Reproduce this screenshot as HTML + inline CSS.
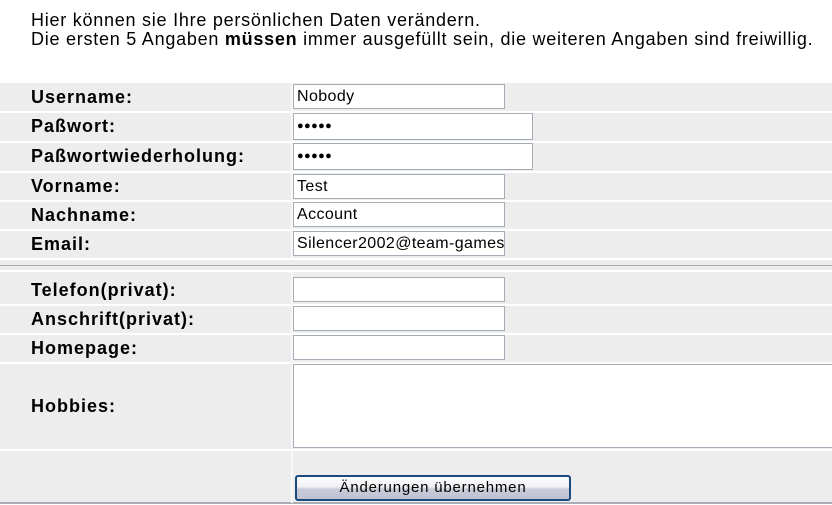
<html><head><style>
body{margin:0;background:#fff;font-family:"Liberation Sans",sans-serif;width:832px;height:505px;overflow:hidden;position:relative}
.t{position:absolute;left:31px;font-size:18px;color:#000;line-height:19px;letter-spacing:0.75px;white-space:nowrap}
.r{position:absolute;left:0;width:832px;background:#ededed}
.c{position:absolute;left:291px;width:2px;background:#f8f8f8}
.l{position:absolute;left:31px;font-size:18px;font-weight:bold;color:#000;letter-spacing:1px;white-space:nowrap}
.i{position:absolute;left:293px;border:1px solid #a5acb5;background:#fff;font-size:16px;letter-spacing:0.4px;padding-left:3px;box-sizing:border-box;line-height:24px;height:25px;overflow:hidden;white-space:nowrap}
</style></head><body>
<div class="t" style="top:11px">Hier können sie Ihre persönlichen Daten verändern.</div>
<div class="t" style="top:30px;left:31px">Die ersten 5 Angaben <b>müssen</b> immer ausgefüllt sein, die weiteren Angaben sind freiwillig.</div>

<div class="r" style="top:83px;height:28px"></div>
<div class="r" style="top:113px;height:28px"></div>
<div class="r" style="top:143px;height:28px"></div>
<div class="r" style="top:173px;height:27px"></div>
<div class="r" style="top:202px;height:27px"></div>
<div class="r" style="top:231px;height:27px"></div>
<div class="r" style="top:260px;height:10px"></div>
<div style="position:absolute;top:265px;left:0;width:832px;height:1px;background:#a8aeb4"></div>
<div class="r" style="top:272px;height:32px"></div>
<div class="r" style="top:306px;height:27px"></div>
<div class="r" style="top:335px;height:27px"></div>
<div class="r" style="top:364px;height:85px"></div>
<div class="r" style="top:451px;height:51px"></div>
<div style="position:absolute;top:502px;left:0;width:832px;height:2px;background:#a8aeb4"></div>
<div class="c" style="top:83px;height:176px"></div>
<div class="c" style="top:272px;height:231px"></div>

<div class="l" style="top:87px">Username:</div>
<div class="l" style="top:116px">Paßwort:</div>
<div class="l" style="top:146px">Paßwortwiederholung:</div>
<div class="l" style="top:176px">Vorname:</div>
<div class="l" style="top:205px">Nachname:</div>
<div class="l" style="top:234px">Email:</div>
<div class="l" style="top:280px">Telefon(privat):</div>
<div class="l" style="top:309px">Anschrift(privat):</div>
<div class="l" style="top:338px">Homepage:</div>
<div class="l" style="top:396px">Hobbies:</div>

<div class="i" style="top:84px;width:212px">Nobody</div>
<div class="i" style="top:113px;width:240px;height:27px;font-size:11px;line-height:25px">●●●●●</div>
<div class="i" style="top:143px;width:240px;height:27px;font-size:11px;line-height:25px">●●●●●</div>
<div class="i" style="top:174px;width:212px">Test</div>
<div class="i" style="top:202px;width:212px">Account</div>
<div class="i" style="top:231px;width:212px">Silencer2002@team-games</div>
<div class="i" style="top:277px;width:212px"></div>
<div class="i" style="top:306px;width:212px"></div>
<div class="i" style="top:335px;width:212px"></div>
<div class="i" style="top:364px;width:540px;height:84px"></div>
<div style="position:absolute;left:295px;top:475px;width:276px;height:26px;box-sizing:border-box;border:2px solid #1c4a7e;border-radius:3px;background:linear-gradient(#fdfdfd 0%,#f0f0f4 45%,#c9cbd8 55%,#bfc2d2 100%);font-size:15px;letter-spacing:0.8px;text-align:center;line-height:22px">Änderungen übernehmen</div>
</body></html>
